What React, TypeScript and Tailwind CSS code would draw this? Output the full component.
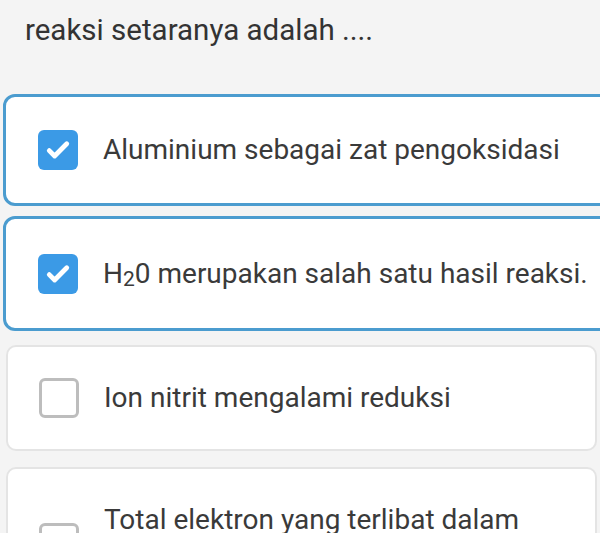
import React from "react";

function Checked() {
  return (
    <div className="w-[40px] h-[40px] shrink-0 rounded-[6px] bg-[#3b9ae6] flex items-center justify-center">
      <svg width="30" height="30" viewBox="0 0 24 24" fill="none">
        <path d="M5 12.5l4.3 4.3L19 7" stroke="white" strokeWidth="3.8" strokeLinecap="round" strokeLinejoin="round" />
      </svg>
    </div>
  );
}

function Unchecked() {
  return <div className="w-[40px] h-[40px] shrink-0 rounded-[6px] border-[3px] border-[#bdbdbd] bg-white" />;
}

export default function App() {
  return (
    <div
      className="w-[600px] h-[533px] overflow-hidden bg-[#f4f4f4] text-[#3a3a3a]"
      style={{ fontFamily: "Roboto, 'Noto Sans', sans-serif" }}
    >
      <div className="pl-[25px] pt-[11px] text-[29.5px] leading-[38px] text-[#333]">reaksi setaranya adalah ....</div>

      <div className="mt-[45px] ml-[3px] w-[620px] h-[112px] rounded-[12px] border-[3px] border-[#4b9ccf] bg-white flex items-center pl-[32px] gap-[25px]">
        <Checked />
        <span className="text-[28px]">Aluminium sebagai zat pengoksidasi</span>
      </div>

      <div className="mt-[10px] ml-[3px] w-[620px] h-[115px] rounded-[12px] border-[3px] border-[#4b9ccf] bg-white flex items-center pl-[32px] gap-[25px]">
        <Checked />
        <span className="text-[28px]">
          H<sub className="text-[21px] relative top-[3px] align-baseline">2</sub>0 merupakan salah satu hasil reaksi.
        </span>
      </div>

      <div className="mt-[14px] ml-[6px] w-[591px] h-[106px] rounded-[10px] border-2 border-[#e4e4e4] bg-white flex items-center pl-[31px] gap-[25px]">
        <Unchecked />
        <span className="text-[28px]">Ion nitrit mengalami reduksi</span>
      </div>

      <div className="mt-[16px] ml-[6px] w-[591px] h-[120px] rounded-[10px] border-2 border-[#e4e4e4] bg-white flex pl-[31px] gap-[25px] pt-[34px]">
        <div className="mt-[20px]"><Unchecked /></div>
        <span className="text-[28px] leading-[34px]">Total elektron yang terlibat dalam</span>
      </div>
    </div>
  );
}
